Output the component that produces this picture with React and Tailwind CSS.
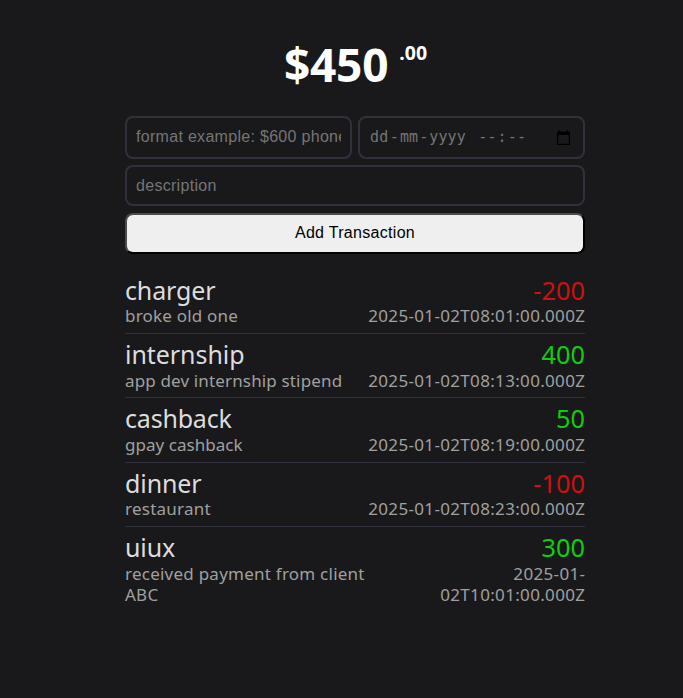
const transactions = [
  { name: 'charger', price: '-200', desc: ['broke old one'], date: ['2025-01-02T08:01:00.000Z'], nameFit: 'tracking-[-0.14px]', descFit: 'tracking-[0.2px]' },
  { name: 'internship', price: '400', desc: ['app dev internship stipend'], date: ['2025-01-02T08:13:00.000Z'], nameFit: 'tracking-[-0.05px]', descFit: 'tracking-[0.15px]' },
  { name: 'cashback', price: '50', desc: ['gpay cashback'], date: ['2025-01-02T08:19:00.000Z'], nameFit: 'tracking-[-0.2px]', descFit: 'tracking-[0.04px]' },
  { name: 'dinner', price: '-100', desc: ['restaurant'], date: ['2025-01-02T08:23:00.000Z'], nameFit: 'tracking-[-0.1px]', descFit: 'tracking-[0.25px]' },
  { name: 'uiux', price: '300', desc: ['received payment from client', 'ABC'], date: ['2025-01-', '02T10:01:00.000Z'], nameFit: 'tracking-[-0.1px]', descFit: 'tracking-[0.24px]' },
];

function Lines({ items }) {
  return items.map((line) => (
    <div key={line} className="whitespace-nowrap"><span>{line}</span></div>
  ));
}

function Transaction({ name, price, desc, date, nameFit, descFit }) {
  return (
    <div className="flex justify-between border-b border-[#32303d] pt-[5.2px] pb-[6.4px] last:border-b-0">
      <div>
        <div className={`text-[25px] leading-[30.8px] text-[#ddd] ${nameFit}`}><span>{name}</span></div>
        <div className={`text-[17px] leading-[21px] text-[#a0a0a0] ${descFit}`}><Lines items={desc} /></div>
      </div>
      <div className="text-right">
        <div className={`text-[25.4px] leading-[30.8px] ${price.startsWith('-') ? 'text-[#c11]' : 'text-[#1c1]'}`}>{price}</div>
        <div className="-mr-[0.3px] text-[17px] leading-[21px] tracking-[0.33px] text-[#a0a0a0]"><Lines items={date} /></div>
      </div>
    </div>
  );
}

const field = 'rounded-[8px] border-2 border-[#32303d] bg-transparent';

export default function App() {
  return (
    <div className="min-h-screen bg-[#19191b] font-['Noto_Sans',sans-serif]">
      <main className="ml-[125px] w-[460px] pt-[31px]">
        <h1 className="flex h-[66px] items-start justify-center pl-[1px] text-[46px] leading-[66px] font-bold text-white">
          <span className="tracking-[-0.2px]">$450</span>
          <span className="ml-[11px] text-[19.5px] leading-[43px]">.00</span>
        </h1>
        <form className="mt-[19px] flex flex-col gap-[6.6px] font-['Liberation_Sans',sans-serif] text-[16px] tracking-[0.3px]">
          <div className="flex gap-[6px]">
            <input className={`${field} h-[42.6px] w-[227px] px-[9px] placeholder:text-[#757575]`} placeholder="format example: $600 phone" />
            <div className={`${field} flex h-[42.6px] w-[227px] items-center pr-[13px] pl-[10px] font-['DejaVu_Sans_Mono',monospace] text-[15px] tracking-[0.1px] text-[#757575]`}>
              <span>dd</span>
              <span className="ml-[1.5px]">-</span>
              <span className="ml-[1px]">mm</span>
              <span className="ml-[1px]">-</span>
              <span className="ml-[1px]">yyyy</span>
              <span className="ml-[12.5px]">--</span>
              <span className="ml-[1px]">:</span>
              <span className="ml-[1px]">--</span>
              <svg className="ml-auto" width="13" height="15" viewBox="0 0 13 15" fill="#000">
                <path fillRule="evenodd" d="M0 1.5h2V0h1v1.5h7V0h1v1.5h2V15H0zM1.2 5v8.8h10.6V5z" />
              </svg>
            </div>
          </div>
          <input className={`${field} h-[41px] px-[9px] placeholder:text-[#757575]`} placeholder="description" />
          <button type="button" className="h-[41px] rounded-[8px] border-2 border-t-[#4c4c4c] border-r-black border-b-black border-l-[#4c4c4c] bg-[#efefef] pb-[0.5px] text-black">Add Transaction</button>
        </form>
        <section className="mt-[15.6px]">
          {transactions.map((t) => <Transaction key={t.name} {...t} />)}
        </section>
      </main>
    </div>
  );
}
